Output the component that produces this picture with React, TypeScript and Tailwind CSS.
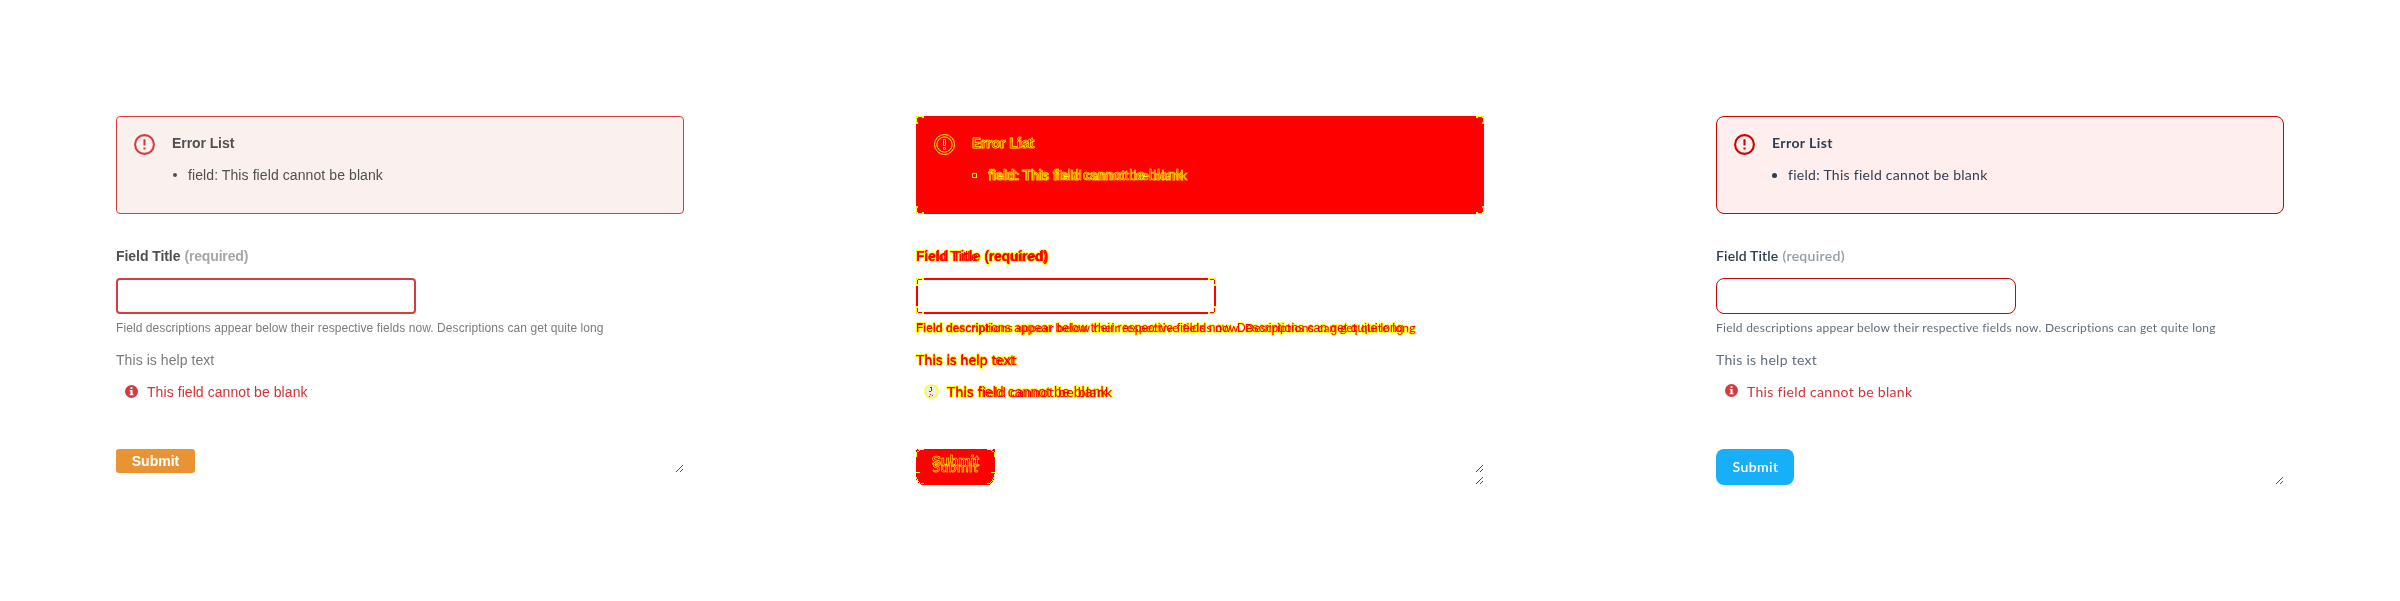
import clsx from "clsx";

type Mode = "before" | "diff" | "after";

const sans = "font-['Liberation_Sans',sans-serif]";
const lato = "font-['Lato',sans-serif]";
const hollow = "text-[#ff0000] [-webkit-text-stroke:0.6px_#ffff00]";
const outlined = "text-[#ff0000] [-webkit-text-stroke:1.5px_#ffff00] [paint-order:stroke_fill]";

type CopyProps = {
  mode: Mode;
  text: string;
  before: string;
  after: string;
  inBox?: boolean;
};

function Copy({ mode, text, before, after, inBox }: CopyProps) {
  if (mode === "before") return <span className={clsx("whitespace-nowrap", sans, before)}>{text}</span>;
  if (mode === "after") return <span className={clsx("whitespace-nowrap", lato, after)}>{text}</span>;
  const mark = inBox ? hollow : outlined;
  return (
    <span className="inline-grid whitespace-nowrap">
      <span className={clsx("col-start-1 row-start-1", sans, before)}>
        <span className={mark}>{text}</span>
      </span>
      <span aria-hidden className={clsx("col-start-1 row-start-1", !inBox && "mix-blend-multiply", lato, after)}>
        <span className={mark}>{text}</span>
      </span>
    </span>
  );
}

function AlertIcon({ mode }: { mode: Mode }) {
  if (mode === "diff") {
    return (
      <svg className="block size-[21px]" viewBox="0 0 21 21" fill="none" stroke="#ffff00">
        <circle cx="10.5" cy="10.5" r="10" />
        <circle cx="10.5" cy="10.5" r="7.6" />
        <path d="M9.5 5.5h2v6h-2zM9.5 13.5h2v2h-2z" />
      </svg>
    );
  }
  return (
    <svg
      className={clsx("block size-[21px]", mode === "before" ? "text-[#d33e40]" : "text-[#c40606]")}
      viewBox="0 0 21 21"
      fill="none"
      stroke="currentColor"
      strokeWidth="2.1"
    >
      <circle cx="10.5" cy="10.5" r="9.4" />
      <path d="M10.5 5.3v6.2M10.5 13.4v2.1" />
    </svg>
  );
}

function InfoIcon({ mode }: { mode: Mode }) {
  if (mode === "diff") {
    return (
      <svg className="-mt-px block h-[15px] w-[15px]" viewBox="0 0 15 15">
        <circle cx="7.5" cy="7.5" r="6.6" fill="#eeeeee" stroke="#ffff00" strokeWidth="1.4" />
        <path d="M6 3h2v1H6zM7 4h1v3H7zM5 7h2v1H5zM6 10h1v1H6zM8 11h1v1H8zM5 12h1v1H5z" fill="#ff0000" />
        <path d="M5 5h1v2H5zM8 5h1v2H8zM7 10h1v1H7z" fill="#ffff00" />
      </svg>
    );
  }
  return (
    <svg className={clsx("mx-px block size-[13px]", mode === "after" && "-mt-px")} viewBox="0 0 13 13">
      <circle cx="6.5" cy="6.5" r="6.5" fill="#d13c3e" />
      <path d="M5.5 2.2h2v1.8h-2zM4.7 5h2.9v4.1h.8v1.2H4.7V9.1h.8V6.2h-.8z" fill="#ffffff" />
    </svg>
  );
}

function Corner({ className }: { className: string }) {
  return (
    <svg className={clsx("absolute size-2", className)} viewBox="0 0 8 8" shapeRendering="crispEdges">
      <path d="M0 0h8v2H5V1H3v1H2v1H1v2h1v3H0z" fill="#ffff00" />
      <path d="M2 1h4v1H2zM1 2h1v4H1z" fill="#ff0000" />
    </svg>
  );
}

function Corners({ inset }: { inset: boolean }) {
  return (
    <>
      <Corner className={inset ? "-top-px -left-px" : "top-0 left-0"} />
      <Corner className={inset ? "-top-px -right-px -scale-x-100" : "top-0 right-0 -scale-x-100"} />
      <Corner className={inset ? "-bottom-px -left-px -scale-y-100" : "bottom-0 left-0 -scale-y-100"} />
      <Corner className={inset ? "-right-px -bottom-px -scale-100" : "right-0 bottom-0 -scale-100"} />
    </>
  );
}

function Grip({ color }: { color: string }) {
  return (
    <svg className={clsx("mr-px block size-[7px]", color)} viewBox="0 0 7 7" shapeRendering="crispEdges" fill="currentColor">
      <path d="M6 0h1v1H6zM5 1h1v1H5zM4 2h1v1H4zM3 3h1v1H3zM2 4h1v1H2zM1 5h1v1H1zM0 6h1v1H0zM6 4h1v1H6zM5 5h1v1H5zM4 6h1v1H4z" />
    </svg>
  );
}

function SubmitButton({ mode }: { mode: Mode }) {
  if (mode === "before") {
    return (
      <button className="flex h-6 w-[79px] items-center justify-center rounded-[3px] bg-[#e89434] text-white">
        <Copy mode={mode} text="Submit" before="text-[14px] leading-6 font-bold" after="" />
      </button>
    );
  }
  if (mode === "after") {
    return (
      <button className="flex h-9 w-[78px] items-center justify-center rounded-lg bg-[#17b0f8] text-white">
        <Copy mode={mode} text="Submit" before="" after="pl-px text-[14px] leading-9 font-semibold tracking-[0.4px]" />
      </button>
    );
  }
  return (
    <button className="relative flex h-9 w-[79px] justify-center">
      <svg className="absolute inset-0 h-9 w-[79px]" viewBox="0 0 79 36" shapeRendering="crispEdges">
        <path d="M1 0h77l1 1v23l-1 1v4a7 7 0 0 1-7 7H8a8 8 0 0 1-8-8V1z" fill="#ff0000" />
        <path
          d="M.5 8V3M1 2.5h2M3 1.5h1M2 .5h6M71 .5h6M75 1.5h1M76 2.5h2M78.5 3v5M0 23.5h4M75 23.5h4M.5 28v2M1.5 30v2M2.5 32v1M3.5 33v1M4.5 34.5h3M77.5 28v2M76.5 30v2M75.5 32v1M74.5 33v1M71 34.5h3"
          stroke="#ffff00"
          fill="none"
        />
      </svg>
      <span className="relative grid">
        <span className={clsx("col-start-1 row-start-1 text-[14px] leading-6 font-bold", sans, hollow)}>Submit</span>
        <span aria-hidden className={clsx("col-start-1 row-start-1 text-[14px] leading-9 font-semibold tracking-[0.4px]", lato, hollow)}>
          Submit
        </span>
      </span>
    </button>
  );
}

function Panel({ mode }: { mode: Mode }) {
  const diff = mode === "diff";
  return (
    <section className="w-[800px] px-[116px] pt-[116px] text-[14px] leading-5">
      <div
        className={clsx(
          "relative flex h-[98px] border pt-4 pl-[17px]",
          mode === "before" && "rounded-[4px] border-[#d33e40] bg-[#faf0ee] text-[#505050]",
          diff && "border-[#ff0000] bg-[#ff0000]",
          mode === "after" && "rounded-lg border-[#c40606] bg-[#ffeeee] text-[#2f3e50]",
        )}
      >
        {diff && <Corners inset />}
        <div className="pt-px">
          <AlertIcon mode={mode} />
        </div>
        <div className="ml-4 flex flex-col items-start gap-3 pl-px">
          <Copy mode={mode} inBox text="Error List" before="font-bold tracking-[-0.08px]" after="font-bold tracking-[0.42px]" />
          <div className="flex items-center">
            {diff ? (
              <span className="size-[5px] border border-[#ffff00]" />
            ) : (
              <span className={clsx("rounded-full bg-current", mode === "before" ? "mx-[0.5px] size-1" : "size-[5px]")} />
            )}
            <span className="ml-[11px] flex">
              <Copy mode={mode} inBox text="field: This field cannot be blank" before="tracking-[0.09px]" after="tracking-[0.28px]" />
            </span>
          </div>
        </div>
      </div>

      <div className="mt-8 flex gap-1">
        <Copy mode={mode} text="Field Title" before="font-bold tracking-[-0.06px] text-[#505050]" after="font-semibold tracking-[0.14px] text-[#2f3e50]" />
        <Copy mode={mode} text="(required)" before="font-bold tracking-[-0.16px] text-[#a6a6a6]" after="font-semibold tracking-[0.3px] text-[#939ca6]" />
      </div>

      <div className="relative mt-3 h-9 w-[300px]">
        <input
          aria-label="Field Title"
          className={clsx(
            "block h-full w-full bg-white px-3 outline-none",
            mode === "before" && "rounded-[4px] border-2 border-[#d33e40]",
            diff && "border-2 border-[#ff0000]",
            mode === "after" && "rounded-lg border border-[#c40606]",
          )}
        />
        {diff && <Corners inset={false} />}
      </div>

      <div className="mt-1.5 flex h-4 text-[12px] leading-4">
        <Copy
          mode={mode}
          text="Field descriptions appear below their respective fields now. Descriptions can get quite long"
          before="tracking-[0.08px] text-[#7b7b7b]"
          after="tracking-[0.255px] text-[#626e7d]"
        />
      </div>
      <div className="mt-3.5 flex h-5">
        <Copy mode={mode} text="This is help text" before="tracking-[0.06px] text-[#7a7a7a]" after="tracking-[0.29px] text-[#626e7d]" />
      </div>
      <div className="mt-3 flex h-5 pl-2">
        <div className="mt-[3px]">
          <InfoIcon mode={mode} />
        </div>
        <span className="ml-2 flex">
          <Copy mode={mode} text="This field cannot be blank" before="tracking-[0.07px] text-[#cf3436]" after="tracking-[0.33px] text-[#cf3436]" />
        </span>
      </div>

      <div className="mt-[47px] flex items-end justify-between">
        <SubmitButton mode={mode} />
        <div className="flex flex-col gap-[5px] pb-px">
          {diff && <Grip color="text-[#ff0000]" />}
          <Grip color={diff ? "text-[#ff0000]" : "text-[#555555]"} />
        </div>
      </div>
    </section>
  );
}

export default function App() {
  return (
    <main className="flex h-[601px] w-[2400px] overflow-hidden bg-white">
      <Panel mode="before" />
      <Panel mode="diff" />
      <Panel mode="after" />
    </main>
  );
}
